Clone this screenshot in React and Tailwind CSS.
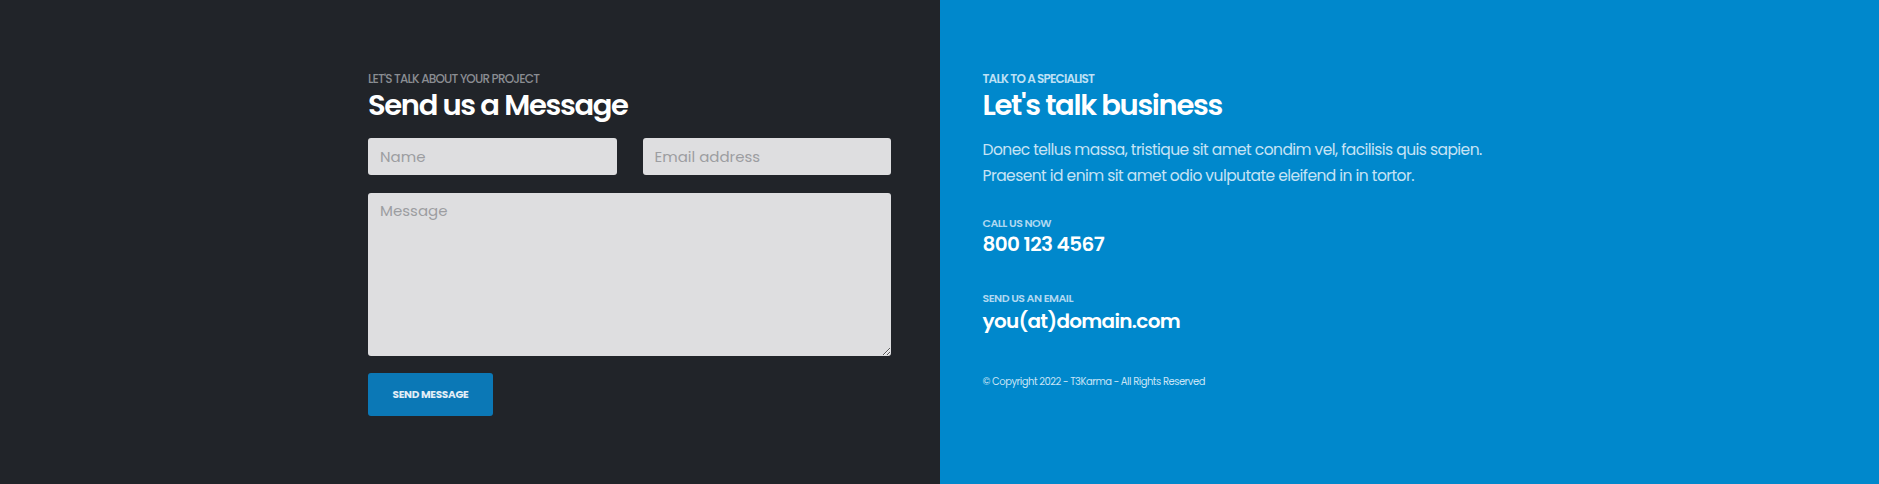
import React from 'react';

const font = { fontFamily: 'Poppins, Inter, "Noto Sans", sans-serif' };

export default function App() {
  return (
    <div className="flex w-full h-[484px]" style={font}>
      {/* left: form */}
      <div className="w-1/2 bg-[#212429] pl-[368px] pt-[72px]">
        <div className="w-[523px]">
          <p className="text-[12px] leading-[14px] font-medium uppercase tracking-[-0.8px] text-[#8a8d92]">
            Let's talk about your project
          </p>
          <h2 className="mt-[1px] text-[29px] leading-[36px] font-semibold tracking-[-1.35px] text-white">
            Send us a Message
          </h2>
          <div className="mt-[15px] flex gap-[26px]">
            <input
              type="text"
              placeholder="Name"
              className="flex-1 min-w-0 h-[37px] rounded-[3px] bg-[#dedee0] px-[12px] text-[15px] text-gray-700 placeholder:text-[#9c9da1] outline-none"
            />
            <input
              type="email"
              placeholder="Email address"
              className="flex-1 min-w-0 h-[37px] rounded-[3px] bg-[#dedee0] px-[12px] text-[15px] text-gray-700 placeholder:text-[#9c9da1] outline-none"
            />
          </div>
          <textarea
            placeholder="Message"
            className="mt-[18px] block w-full h-[163px] rounded-[3px] bg-[#dedee0] px-[12px] pt-[7px] text-[15px] leading-[22px] text-gray-700 placeholder:text-[#9c9da1] outline-none"
          />
          <button className="mt-[17px] w-[125px] h-[43px] rounded-[3px] bg-[#0b78b6] text-[10.5px] font-bold uppercase tracking-[-0.3px] text-[#e2eef7]">
            Send Message
          </button>
        </div>
      </div>

      {/* right: contact info */}
      <div className="w-1/2 bg-[#0088cc] pl-[43px] pt-[72px]">
        <p className="text-[12px] leading-[14px] font-semibold uppercase tracking-[-0.8px] text-[#bde0f5]">
          Talk to a specialist
        </p>
        <h2 className="mt-[1px] text-[29px] leading-[36px] font-semibold tracking-[-1.35px] text-white">
          Let's talk business
        </h2>
        <p className="mt-[14px] text-[15.5px] leading-[26px] tracking-[-0.55px] text-[#c6e3f5]">
          Donec tellus massa, tristique sit amet condim vel, facilisis quis sapien.
          <br />
          Praesent id enim sit amet odio vulputate eleifend in in tortor.
        </p>
        <p className="mt-[27px] text-[11px] leading-[14px] font-semibold uppercase tracking-[-0.5px] text-[#b0d8f1]">
          Call us now
        </p>
        <p className="text-[20px] leading-[28px] font-semibold tracking-[-0.6px] text-white">
          800 123 4567
        </p>
        <p className="mt-[33px] text-[11px] leading-[14px] font-semibold uppercase tracking-[-0.5px] text-[#b0d8f1]">
          Send us an email
        </p>
        <p className="mt-[2px] text-[20px] leading-[28px] font-semibold tracking-[-0.7px] text-white">
          you(at)domain.com
        </p>
        <p className="mt-[40px] text-[10px] leading-[14px] tracking-[-0.5px] text-[#c8e4f6]">
          © Copyright 2022 - T3Karma - All Rights Reserved
        </p>
      </div>
    </div>
  );
}
